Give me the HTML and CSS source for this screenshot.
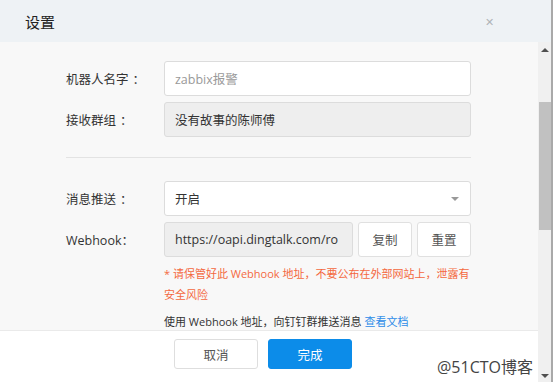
FILE: index.html
```html
<!DOCTYPE html>
<html lang="zh-CN">
<head>
  <meta charset="UTF-8">
  <title>设置</title>
  <link rel="stylesheet" href="styles.css">
</head>
<body>
  <div class="dialog">
    <div class="dialog-header">
      <span class="dialog-title">设置</span>
      <span class="dialog-close">&#x2715;</span>
    </div>
    <div class="dialog-main">
      <div class="dialog-column">
        <div class="dialog-body">
          <div class="form-row">
            <label class="form-label">机器人名字<span class="colon">：</span></label>
            <div class="form-input placeholder">zabbix报警</div>
          </div>
          <div class="form-row">
            <label class="form-label">接收群组<span class="colon">：</span></label>
            <div class="form-input disabled">没有故事的陈师傅</div>
          </div>
          <div class="divider"></div>
          <div class="form-row">
            <label class="form-label">消息推送<span class="colon">：</span></label>
            <div class="form-input select">
              <span>开启</span>
              <span class="caret"></span>
            </div>
          </div>
          <div class="form-row">
            <label class="form-label">Webhook：</label>
            <div class="form-input disabled webhook">https://oapi.dingtalk.com/ro</div>
            <button class="small-btn">复制</button>
            <button class="small-btn">重置</button>
          </div>
          <p class="warn-text">* 请保管好此 Webhook 地址，不要公布在外部网站上，泄露有安全风险</p>
          <p class="help-text">使用 Webhook 地址，向钉钉群推送消息 <a class="doc-link">查看文档</a></p>
        </div>
        <div class="dialog-footer">
          <button class="btn">取消</button>
          <button class="btn primary">完成</button>
        </div>
      </div>
      <!-- 右侧滚动条 -->
      <div class="scrollbar">
        <span class="arrow up"></span>
        <div class="thumb"></div>
        <span class="arrow down"></span>
      </div>
    </div>
    <span class="watermark">@51CTO博客</span>
  </div>
</body>
</html>
```

FILE: styles.css
```css
/* 页面整体 */
body {
  margin: 0;
  font-family: "Open Sans", "Noto Sans CJK SC", sans-serif;
  font-size: 12.5px;
  color: #333;
  background: #fff;
}
.dialog {
  position: relative;
  width: 551px;
  height: 382px;
  border-right: 2px solid #a9a9a9;
  display: flex;
  flex-direction: column;
  overflow: hidden;
}
/* 标题栏 */
.dialog-header {
  height: 42px;
  flex: none;
  display: flex;
  align-items: center;
  justify-content: space-between;
  padding: 0 57px 0 25px;
  background: #eef2f5;
}
.dialog-title {
  font-size: 15px;
  color: #222;
}
.dialog-close {
  font-size: 11px;
  color: #b0b4b8;
}
.dialog-main {
  flex: 1;
  display: flex;
  min-height: 0;
}
.dialog-column {
  flex: 1;
  display: flex;
  flex-direction: column;
}
/* 内容区 */
.dialog-body {
  height: 288px;
  flex: none;
  overflow: hidden;
  background: #f8f8f8;
  padding: 19px 67px 0 66px;
  box-sizing: border-box;
}
.form-row {
  display: flex;
  align-items: center;
  margin-bottom: 6px;
}
.form-label {
  width: 98px;
  flex: none;
}
.colon {
  margin-left: 4px;
}
.form-input {
  flex: 1;
  height: 35px;
  box-sizing: border-box;
  border: 1px solid #dcdcdc;
  border-radius: 3px;
  background: #fff;
  padding: 0 10px;
  display: flex;
  align-items: center;
  white-space: nowrap;
  overflow: hidden;
}
.form-input.placeholder {
  color: #999;
}
.form-input.disabled {
  background: #eeeeee;
}
.form-input.select {
  justify-content: space-between;
  padding-right: 11px;
}
.caret {
  width: 0;
  height: 0;
  border-left: 4px solid transparent;
  border-right: 4px solid transparent;
  border-top: 4px solid #999;
}
.form-input.webhook {
  flex: none;
  width: 189px;
}
.small-btn {
  width: 54px;
  height: 35px;
  margin-left: 5px;
  border: 1px solid #e0e0e0;
  border-radius: 3px;
  background: #fff;
  font: inherit;
  color: #555;
}
.divider {
  height: 1px;
  background: #e3e3e3;
  margin: 20px 0 23px;
}
.warn-text {
  margin: 6px 0 0 98px;
  font-size: 11px;
  color: #f4683f;
  line-height: 21px;
}
.help-text {
  margin: 6px 0 0 98px;
  font-size: 11px;
  line-height: 21px;
}
.doc-link {
  color: #2d8ce8;
}
/* 底部按钮 */
.dialog-footer {
  flex: 1;
  background: #fff;
  border-top: 1px solid #eaeaea;
  display: flex;
  gap: 10px;
  padding: 8px 0 0 174px;
}
.btn {
  width: 84px;
  height: 30px;
  border: 1px solid #dedede;
  border-radius: 3px;
  background: #fff;
  font: inherit;
  color: #555;
}
.btn.primary {
  background: #0c8ce9;
  border-color: #0c8ce9;
  color: #fff;
}
/* 滚动条 */
.scrollbar {
  width: 14px;
  flex: none;
  background: #f0f0f0;
  position: relative;
}
.thumb {
  position: absolute;
  top: 60px;
  left: 1px;
  width: 12px;
  height: 128px;
  background: #c1c1c1;
}
.arrow {
  position: absolute;
  left: 3px;
  width: 0;
  height: 0;
  border-left: 4px solid transparent;
  border-right: 4px solid transparent;
}
.arrow.up {
  top: 6px;
  border-bottom: 4px solid #505050;
}
.arrow.down {
  bottom: 4px;
  border-top: 4px solid #505050;
}
/* 水印 */
.watermark {
  position: absolute;
  left: 437px;
  top: 354px;
  font-size: 16px;
  color: #444;
  text-shadow: 0 0 2px #fff;
}
```
